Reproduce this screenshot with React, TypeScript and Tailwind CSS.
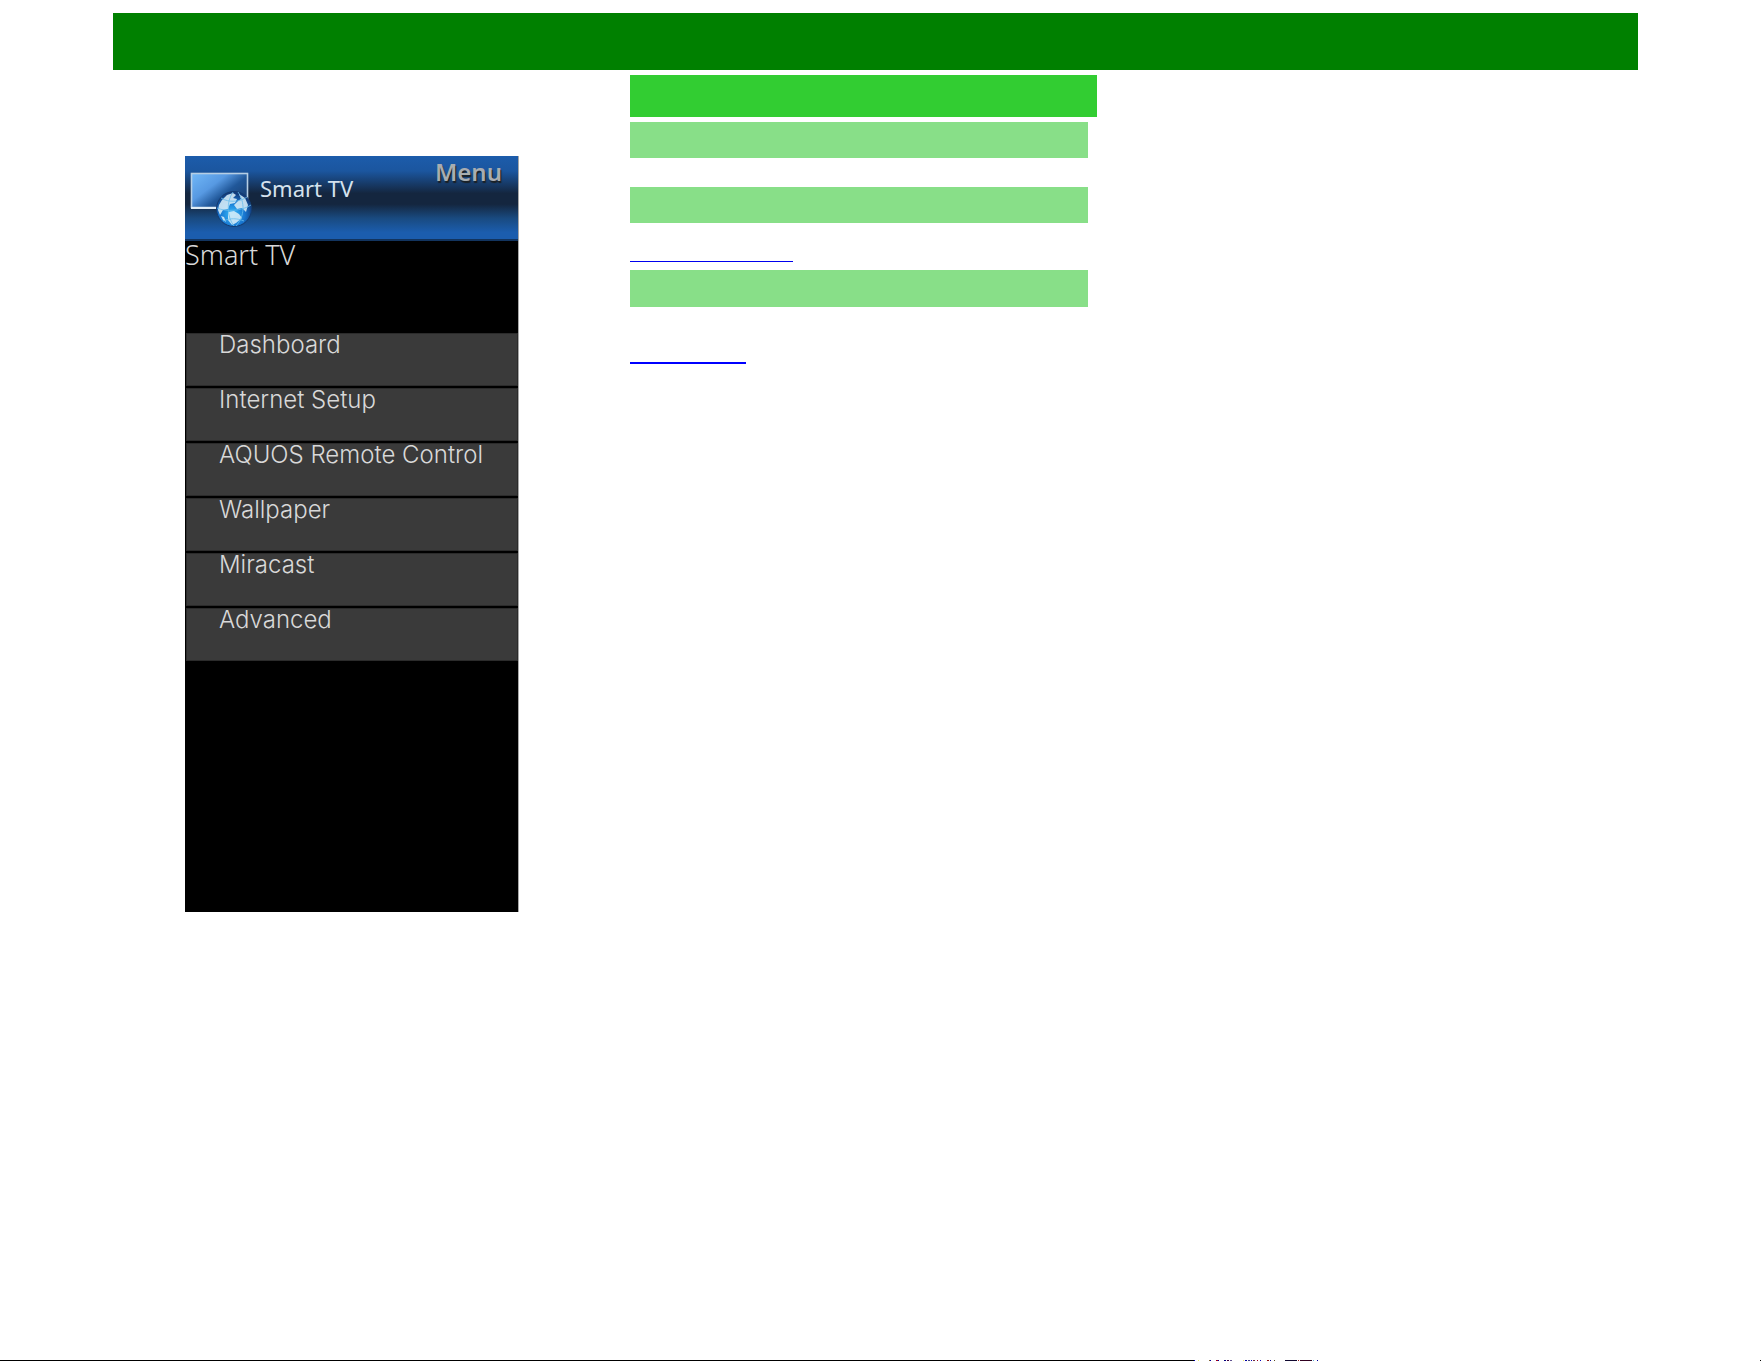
import { useId } from "react";

const menuItems = [
  "Dashboard",
  "Internet Setup",
  "AQUOS Remote Control",
  "Wallpaper",
  "Miracast",
  "Advanced",
];

// [start, width, color] of the marks at the end of the footer rule
const ruleMarks: [number, number, string][] = [
  [0, 1, "#0000c0"],
  [4, 1, "#e8e870"],
  [15, 1, "#806030"],
  [16, 1, "#0000a0"],
  [22, 2, "#a00020"],
  [24, 1, "#0000a0"],
  [30, 2, "#000080"],
  [33, 2, "#400040"],
  [36, 2, "#605090"],
  [49, 1, "#e8e870"],
  [51, 2, "#0000a0"],
  [54, 2, "#404080"],
  [57, 1, "#0000c0"],
  [59, 2, "#703040"],
  [63, 1, "#a00020"],
  [66, 1, "#0000c0"],
  [73, 2, "#901010"],
  [76, 1, "#0000a0"],
  [80, 1, "#605020"],
  [91, 12, "#100830"],
  [104, 1, "#a02020"],
  [106, 12, "#300020"],
  [119, 1, "#60b0d0"],
  [123, 1, "#0000a0"],
];

export default function App() {
  return (
    <div className="flex min-h-screen flex-col bg-white font-['Liberation_Sans',sans-serif]">
      <header className="mt-[13px] mr-[123px] ml-[113px] h-[57px] bg-[#008000]" />

      <main className="mr-[123px] ml-[113px] grid grid-cols-[517fr_467fr_541fr] pt-[5px]">
        <div className="pt-[81px] pl-[72px]">
          <MenuPanel />
        </div>

        <div>
          <div className="h-[42px] bg-[#32cd32]" />
          <div className="mt-[5px] mr-[9px]">
            <div className="h-9 bg-[#88df88]" />
            <div className="mt-[29px] h-9 bg-[#88df88]" />
            <a
              href="#internet"
              aria-label="Internet Setup"
              className="mt-[18px] block h-[21px] w-[163px] border-b border-[#0000ee]"
            />
            <div className="mt-2 h-[37px] bg-[#88df88]" />
            <a
              href="#advanced"
              aria-label="Advanced"
              className="mt-9 block h-[21px] w-[116px] border-b-2 border-[#0000ff]"
            />
          </div>
        </div>
      </main>

      <footer className="mt-auto flex h-px">
        <div className="w-[1194px] bg-black" />
        <svg width="124" height="1" viewBox="0 0 124 1" shapeRendering="crispEdges" aria-hidden="true">
          {ruleMarks.map(([x, width, fill]) => (
            <rect key={x} x={x} width={width} height="1" fill={fill} />
          ))}
        </svg>
        <div className="ml-auto w-px bg-black" />
      </footer>
    </div>
  );
}

function MenuPanel() {
  return (
    <section className="flex min-h-[756px] w-[334px] flex-col border-r border-[#a8a8a8] bg-black text-[#d8d8d8]">
      <div className="flex h-[85px] items-start border-b-2 border-[#12345f] bg-[linear-gradient(#1c5cab_0%,#1b569f_18%,#14263f_45%,#14263f_58%,#194a80_75%,#1b5dae_92%)] pl-[5px]">
        <TvIcon />
        <span className="mt-5 ml-2 font-['Noto_Sans',sans-serif] text-[22px] leading-6 text-[#d5e2ee]">Smart TV</span>
        <span className="mt-1 mr-4 ml-auto font-['Noto_Sans',sans-serif] text-2xl leading-6 font-semibold text-[#a9adb0] [text-shadow:1px_2px_1px_#1b2024]">
          Menu
        </span>
      </div>
      <h1 className="h-[92px] font-['Noto_Sans',sans-serif] text-[27px] leading-7 font-light">Smart TV</h1>
      <nav className="ml-px flex flex-col gap-[2px]">
        {menuItems.map((item) => (
          <a
            key={item}
            href="#"
            className="block h-[53px] border border-[#2b2b2b] bg-[#3a3a3a] pl-8 font-['Inter',sans-serif] text-2xl leading-[22px] font-light"
          >
            {item}
          </a>
        ))}
      </nav>
    </section>
  );
}

function TvIcon() {
  const id = useId();
  return (
    <svg className="mt-4 shrink-0" width="62" height="56" viewBox="0 0 62 56" aria-hidden="true">
      <defs>
        <linearGradient id={`${id}screen`} x1="0" y1="0" x2="1" y2="0.8">
          <stop offset="0" stopColor="#71b8f8" />
          <stop offset="0.4" stopColor="#5799e2" />
          <stop offset="0.65" stopColor="#205799" />
          <stop offset="1" stopColor="#183c6d" />
        </linearGradient>
        <radialGradient id={`${id}globe`} cx="0.45" cy="0.65" r="0.6">
          <stop offset="0" stopColor="#39bdfc" />
          <stop offset="0.6" stopColor="#1775d0" />
          <stop offset="1" stopColor="#123c7c" />
        </radialGradient>
      </defs>
      <rect x="1.5" y="1.5" width="56" height="34" fill={`url(#${id}screen)`} stroke="#b5cee4" strokeWidth="1.6" />
      <path d="M1 36h27" stroke="#e0edf6" strokeWidth="2" />
      <circle cx="44" cy="37" r="17.5" fill={`url(#${id}globe)`} stroke="#143b70" />
      <path
        d="M32 28l5-5 6-2 3 2-3 3 4 1-2 4-5 1-2 5-5 1-3 5-2-5 1-5zM49 22l6 4 3 7-2 7-4-4-5 1-3-4 4-4 3-2zM38 40l6-1 5 3 3 4-6 5-4 2-4-5zM31 44l3 1 2 5-3-2z"
        fill="#d8edf7"
        opacity="0.88"
      />
      <path
        d="M27 36c9 4 25 3 34-3M31 26c8 5 19 4 26-1M33 49c7-3 14-3 21 0M43 20c-7 10-6 25 1 34M48 20c7 10 7 24-2 34"
        fill="none"
        stroke="#68bcec"
        strokeWidth="0.8"
      />
    </svg>
  );
}
